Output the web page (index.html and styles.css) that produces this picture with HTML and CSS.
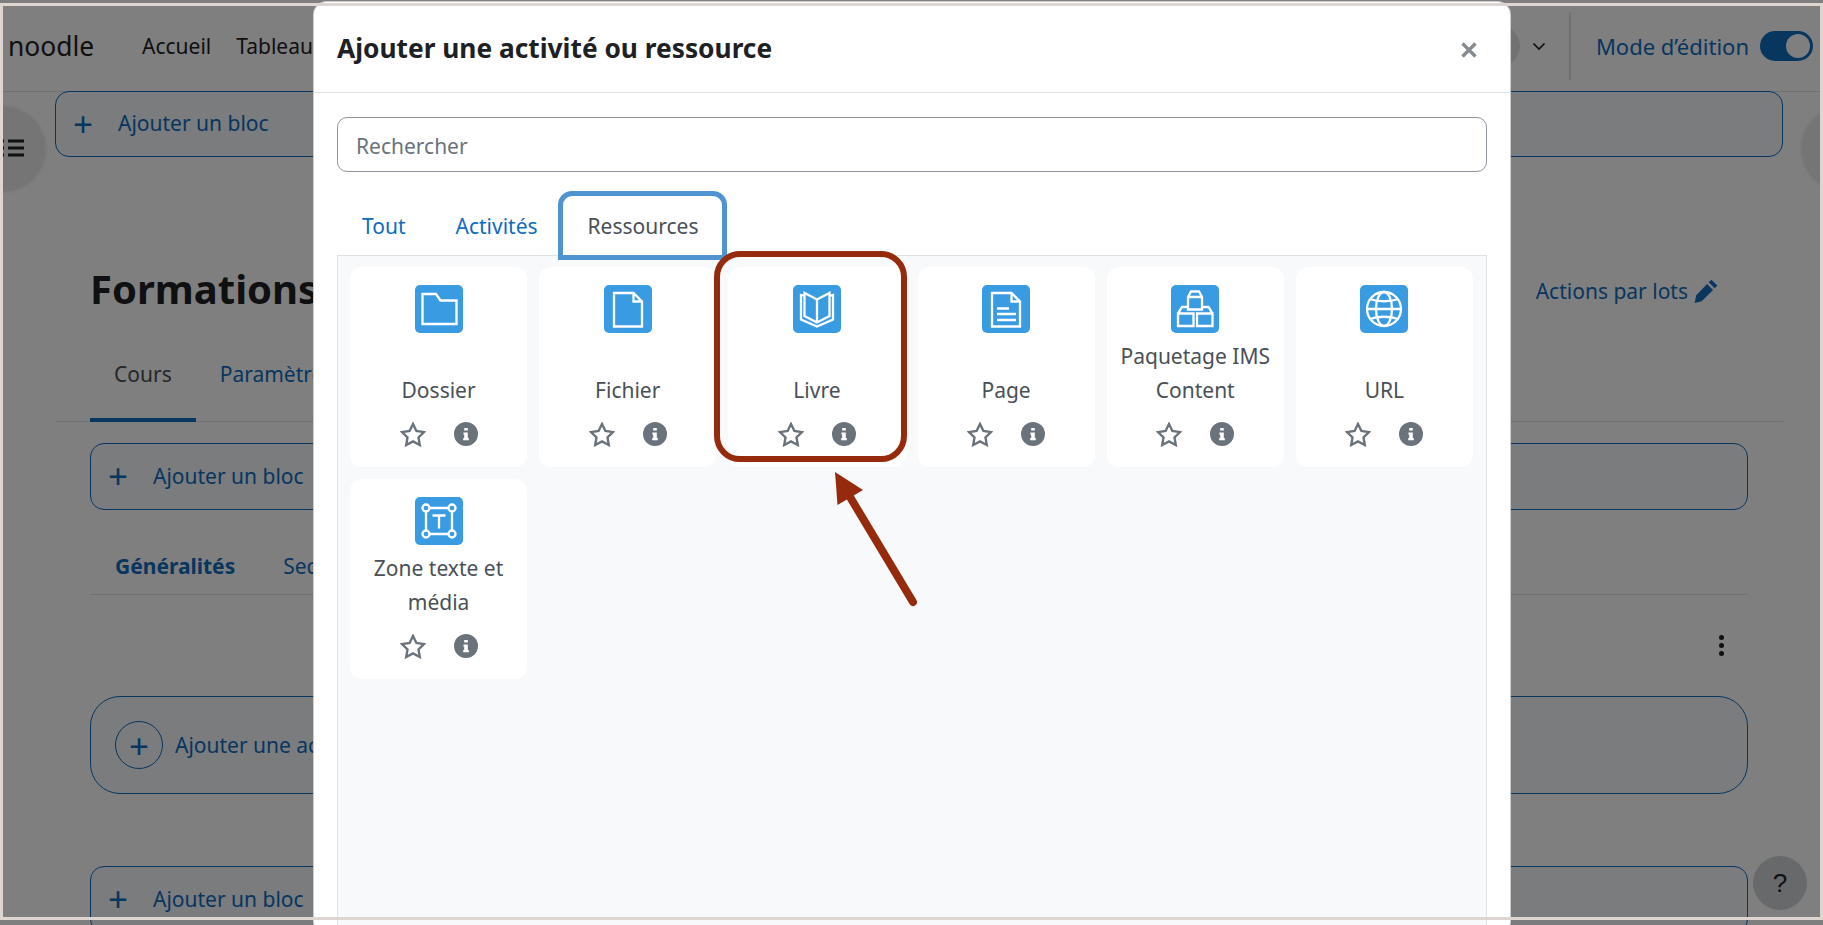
FILE: index.html
```html
<!DOCTYPE html>
<html lang="fr">
<head>
    <meta charset="UTF-8">
    <title>Ajouter une activité ou ressource</title>
    <link rel="stylesheet" href="styles.css">
</head>
<body>
    <div class="page">
        <header class="navbar">
            <span class="brand">noodle</span>
            <a class="nav-link">Accueil</a>
            <a class="nav-link">Tableau</a>
            <div class="nav-right">
                <span class="avatar"></span>
                <svg class="chevron" width="14" height="14" viewBox="0 0 14 14"><path d="M1.500 4.500l5.500 5.500 5.500-5.500" fill="none" stroke="#1d2125" stroke-width="1.700"/></svg>
                <span class="nav-sep"></span>
                <span class="edit-label">Mode d’édition</span>
                <span class="toggle"><span class="knob"></span></span>
            </div>
        </header>

        <button class="drawer drawer-left">
            <svg width="24" height="20" viewBox="0 0 24 20"><path d="M0 3h3M0 10h3M0 17h3M7 3h16M7 10h16M7 17h16" stroke="#1d2125" stroke-width="3"/></svg>
        </button>
        <span class="drawer drawer-right"></span>

        <div class="add-block add-block-top"><span class="plus">+</span>Ajouter un bloc</div>

        <main class="content">
            <div class="title-row">
                <h1>Formations</h1>
                <a class="bulk">Actions par lots
                    <svg width="26" height="26" viewBox="0 0 24 24"><path d="M17 1.500l5.500 5.500-2.500 2.500L14.500 4zM13 5.500l5.500 5.500L8 21.500 1.500 23 3 16z" fill="#0f6cbf"/></svg>
                </a>
            </div>
            <nav class="course-tabs">
                <a class="course-tab active">Cours</a>
                <a class="course-tab">Paramètres</a>
            </nav>
            <div class="add-block"><span class="plus">+</span>Ajouter un bloc</div>
            <nav class="section-tabs">
                <a class="section-tab active">Généralités</a>
                <a class="section-tab">Section 1</a>
            </nav>
            <div class="kebab-row"><span class="kebab"><i></i><i></i><i></i></span></div>
            <div class="add-activity"><span class="plus-circle">+</span>Ajouter une activité ou ressource</div>
            <div class="add-block add-block-last"><span class="plus">+</span>Ajouter un bloc</div>
        </main>

        <span class="help">?</span>
    </div>

    <div class="backdrop"></div>

    <section class="modal">
        <div class="modal-header">
            <h2>Ajouter une activité ou ressource</h2>
            <svg class="close" width="16" height="16" viewBox="0 0 16 16"><path d="M1.500 1.500l13 13M14.500 1.500l-13 13" stroke="#868b90" stroke-width="3.400"/></svg>
        </div>
        <div class="modal-body">
            <input class="search" type="text" placeholder="Rechercher">
            <div class="tabs">
                <a class="tab">Tout</a>
                <a class="tab">Activités</a>
                <a class="tab tab-active">Ressources</a>
            </div>
            <div class="panel">
                <div class="grid">
                    <div class="card">
                        <svg class="mod-icon" viewBox="0 0 48 48"><path d="M7.500 9h13.500l4.500 6.500h16v23.500h-34z"/></svg>
                        <div class="card-label">Dossier</div>
                        <div class="card-actions">
                            <svg class="star" viewBox="0 0 26 25"><path d="M13 2l3.400 7 7.600 1.100-5.500 5.300 1.300 7.600L13 19.400 6.200 23l1.300-7.600L2 10.100 9.600 9z"/></svg>
                            <svg class="info" viewBox="0 0 24 24"><circle cx="12" cy="12" r="12"/><path d="M10.200 6h3.600v2.600h-3.600zM9.500 10.500h4.300v5.500h1v2.200h-5.600V16h1v-3.300h-.7z"/></svg>
                        </div>
                    </div>
                    <div class="card">
                        <svg class="mod-icon" viewBox="0 0 48 48"><path d="M10 8h19.500l8.500 8.500V41.500H10zM29.500 8v8.500H38"/></svg>
                        <div class="card-label">Fichier</div>
                        <div class="card-actions">
                            <svg class="star" viewBox="0 0 26 25"><path d="M13 2l3.400 7 7.600 1.100-5.500 5.300 1.300 7.600L13 19.400 6.200 23l1.300-7.600L2 10.100 9.600 9z"/></svg>
                            <svg class="info" viewBox="0 0 24 24"><circle cx="12" cy="12" r="12"/><path d="M10.200 6h3.600v2.600h-3.600zM9.500 10.500h4.300v5.500h1v2.200h-5.600V16h1v-3.300h-.7z"/></svg>
                        </div>
                    </div>
                    <div class="card">
                        <svg class="mod-icon" viewBox="0 0 48 48"><path d="M24 14.500L11.500 8v23L24 37.500 36.500 31V8zM24 14.500v23M11.500 11L8 10v24.500l16 7 16-7V10l-3.500 1"/></svg>
                        <div class="card-label">Livre</div>
                        <div class="card-actions">
                            <svg class="star" viewBox="0 0 26 25"><path d="M13 2l3.400 7 7.600 1.100-5.500 5.300 1.300 7.600L13 19.400 6.200 23l1.300-7.600L2 10.100 9.600 9z"/></svg>
                            <svg class="info" viewBox="0 0 24 24"><circle cx="12" cy="12" r="12"/><path d="M10.200 6h3.600v2.600h-3.600zM9.500 10.500h4.300v5.500h1v2.200h-5.600V16h1v-3.300h-.7z"/></svg>
                        </div>
                    </div>
                    <div class="card">
                        <svg class="mod-icon" viewBox="0 0 48 48"><path d="M10 8h19.500l8.500 8.500V41.500H10zM29.500 8v8.500H38M15 23.500h12M15 29h19M15 35h19"/></svg>
                        <div class="card-label">Page</div>
                        <div class="card-actions">
                            <svg class="star" viewBox="0 0 26 25"><path d="M13 2l3.400 7 7.600 1.100-5.500 5.300 1.300 7.600L13 19.400 6.200 23l1.300-7.600L2 10.100 9.600 9z"/></svg>
                            <svg class="info" viewBox="0 0 24 24"><circle cx="12" cy="12" r="12"/><path d="M10.200 6h3.600v2.600h-3.600zM9.500 10.500h4.300v5.500h1v2.200h-5.600V16h1v-3.300h-.7z"/></svg>
                        </div>
                    </div>
                    <div class="card">
                        <svg class="mod-icon" viewBox="0 0 48 48"><path d="M17 12l3-5.500h8L31 12V24.500H17zM17 12h14M7 41V28.500L11 22h6M7 28.500h15.500V41H7zM26 41V28.500h15.500V41zM41.500 28.500L37.500 22H31"/></svg>
                        <div class="card-label">Paquetage IMS Content</div>
                        <div class="card-actions">
                            <svg class="star" viewBox="0 0 26 25"><path d="M13 2l3.400 7 7.600 1.100-5.500 5.300 1.300 7.600L13 19.400 6.200 23l1.300-7.600L2 10.100 9.600 9z"/></svg>
                            <svg class="info" viewBox="0 0 24 24"><circle cx="12" cy="12" r="12"/><path d="M10.200 6h3.600v2.600h-3.600zM9.500 10.500h4.300v5.500h1v2.200h-5.600V16h1v-3.300h-.7z"/></svg>
                        </div>
                    </div>
                    <div class="card">
                        <svg class="mod-icon" viewBox="0 0 48 48"><circle cx="24" cy="24" r="17"/><ellipse cx="24" cy="24" rx="8" ry="17"/><path d="M7 24h34M10 14c8 3 20 3 28 0M10 34c8-3 20-3 28 0"/></svg>
                        <div class="card-label">URL</div>
                        <div class="card-actions">
                            <svg class="star" viewBox="0 0 26 25"><path d="M13 2l3.400 7 7.600 1.100-5.500 5.300 1.300 7.600L13 19.400 6.200 23l1.300-7.600L2 10.100 9.600 9z"/></svg>
                            <svg class="info" viewBox="0 0 24 24"><circle cx="12" cy="12" r="12"/><path d="M10.200 6h3.600v2.600h-3.600zM9.500 10.500h4.300v5.500h1v2.200h-5.600V16h1v-3.300h-.7z"/></svg>
                        </div>
                    </div>
                    <div class="card">
                        <svg class="mod-icon" viewBox="0 0 48 48"><circle cx="11" cy="11" r="3.500"/><circle cx="37" cy="11" r="3.500"/><circle cx="11" cy="37" r="3.500"/><circle cx="37" cy="37" r="3.500"/><path d="M14.500 11h19M14.500 37h19M11 14.500v19M37 14.500v19M17.500 18.500h13M24 18.500v13"/></svg>
                        <div class="card-label">Zone texte et média</div>
                        <div class="card-actions">
                            <svg class="star" viewBox="0 0 26 25"><path d="M13 2l3.400 7 7.600 1.100-5.500 5.300 1.300 7.600L13 19.400 6.200 23l1.300-7.600L2 10.100 9.600 9z"/></svg>
                            <svg class="info" viewBox="0 0 24 24"><circle cx="12" cy="12" r="12"/><path d="M10.200 6h3.600v2.600h-3.600zM9.500 10.500h4.300v5.500h1v2.200h-5.600V16h1v-3.300h-.7z"/></svg>
                        </div>
                    </div>
                </div>
            </div>
        </div>
    </section>

    <!-- annotations from the screenshot -->
    <div class="mark-tab"></div>
    <div class="mark-card"></div>
    <svg class="mark-arrow" width="100" height="150" viewBox="0 0 100 150">
        <path d="M20 25L83 130" fill="none" stroke="#952a0d" stroke-width="8" stroke-linecap="round"/>
        <path d="M5 0L33 18L7.500 33z" fill="#952a0d"/>
    </svg>
    <div class="frame"></div>
</body>
</html>
```
FILE: styles.css
```css
* {
    box-sizing: border-box;
}
html, body {
    margin: 0;
    height: 925px;
    overflow: hidden;
}
body {
    font-family: "Noto Sans", "Open Sans", sans-serif;
    font-size: 21px;
    color: #1d2125;
    background: #fff;
    position: relative;
}
a {
    text-decoration: none;
}

/* page behind the modal */
.page {
    height: 925px;
    overflow: hidden;
}
.navbar {
    height: 92px;
    padding: 0 10px 0 8px;
    border-bottom: 1px solid #dee2e6;
    display: flex;
    align-items: center;
}
.brand {
    font-size: 26.400px;
    width: 134px;
}
.nav-link {
    margin-right: 25px;
    white-space: nowrap;
}
.nav-right {
    margin-left: auto;
    display: flex;
    align-items: center;
}
.avatar {
    width: 40px;
    height: 40px;
    border-radius: 50%;
    background: #e4e4e4;
    margin-right: 12px;
}
.chevron {
    margin-right: 23px;
}
.nav-sep {
    width: 2px;
    height: 68px;
    background: #dee2e6;
    margin-right: 25px;
}
.edit-label {
    color: #0f6cbf;
    font-size: 22px;
    margin-right: 11px;
}
.toggle {
    width: 53px;
    height: 30px;
    border-radius: 15px;
    background: #0f6cbf;
    display: flex;
    align-items: center;
    justify-content: flex-end;
    padding-right: 3px;
}
.knob {
    width: 24px;
    height: 24px;
    border-radius: 50%;
    background: #fff;
}
.drawer {
    position: absolute;
    top: 107px;
    width: 84px;
    height: 84px;
    border: 0;
    border-radius: 50%;
    background: #eaeaea;
    box-shadow: 0 0 4px rgba(0, 0, 0, .15);
    padding: 0;
}
.drawer-left {
    left: -39px;
    text-align: right;
    padding-right: 20px;
}
.drawer-right {
    left: 1802px;
}
.add-block {
    height: 67px;
    border: 1px solid #0f6cbf;
    border-radius: 14px;
    background: #f5f9fc;
    color: #0f6cbf;
    display: flex;
    align-items: center;
    padding: 0 0 2px 17px;
}
.add-block-top {
    height: 66px;
    margin: -1px 40px 0 55px;
}
.add-block-last {
    margin-top: 72px;
}
.plus {
    font-size: 35px;
    line-height: 1;
    width: 45px;
    font-weight: 400;
}
.content {
    margin: 0 75px 0 90px;
}
.title-row {
    display: flex;
    align-items: center;
    justify-content: space-between;
    height: 80px;
    margin-top: 93px;
    padding-right: 29px;
}
h1 {
    font-size: 40px;
    font-weight: 700;
    margin: -4px 0 0;
}
.bulk {
    color: #0f6cbf;
    display: flex;
    align-items: center;
    gap: 5px;
    margin-top: 2px;
}
.course-tabs {
    height: 92px;
    display: flex;
    align-items: flex-start;
    margin-left: -35px;
    margin-right: -35px;
    padding-left: 35px;
    border-bottom: 1px solid #dee2e6;
}
.course-tab {
    height: 92px;
    line-height: 88px;
    padding: 0 24px;
    color: #0f6cbf;
}
.course-tab.active {
    color: #495057;
    border-bottom: 4px solid #0f6cbf;
}
.course-tabs + .add-block {
    margin-top: 21px;
}
.section-tabs {
    height: 85px;
    display: flex;
    align-items: center;
    gap: 48px;
    padding: 28px 25px 0;
    border-bottom: 1px solid #dee2e6;
}
.section-tab {
    color: #0f6cbf;
}
.section-tab.active {
    font-weight: 700;
}
.kebab-row {
    height: 101px;
    display: flex;
    justify-content: flex-end;
    padding: 40px 24px 0 0;
}
.kebab {
    display: flex;
    flex-direction: column;
    gap: 3px;
}
.kebab i {
    width: 5px;
    height: 5px;
    border-radius: 50%;
    background: #1d2125;
}
.add-activity {
    height: 98px;
    border: 1px solid #0f6cbf;
    border-radius: 30px;
    background: #f5f9fc;
    color: #0f6cbf;
    display: flex;
    align-items: center;
    padding-left: 24px;
    gap: 12px;
}
.plus-circle {
    width: 48px;
    height: 48px;
    border: 1px solid #0f6cbf;
    border-radius: 50%;
    display: flex;
    align-items: center;
    justify-content: center;
    font-size: 35px;
}
.help {
    position: absolute;
    left: 1753px;
    top: 856px;
    width: 54px;
    height: 54px;
    border-radius: 50%;
    background: #ced2d5;
    display: flex;
    align-items: center;
    justify-content: center;
    font: 26px "Liberation Sans", sans-serif;
}

.backdrop {
    position: absolute;
    inset: 0;
    background: rgba(0, 0, 0, .5);
}

/* modal */
.modal {
    position: absolute;
    left: 313px;
    top: 1px;
    width: 1198px;
    height: 934px;
    background: #fff;
    border: 1px solid rgba(0, 0, 0, .2);
    border-radius: 14px;
}
.modal-header {
    height: 91px;
    padding: 0 23px;
    border-bottom: 1px solid #dee2e6;
    display: flex;
    align-items: center;
    justify-content: space-between;
}
h2 {
    font-size: 26.300px;
    font-weight: 700;
    margin: 1px 0 0;
}
.close {
    margin-right: 10px;
    margin-top: 5px;
}
.modal-body {
    padding: 24px 23px 0;
}
.search {
    display: block;
    width: 100%;
    height: 55px;
    border: 1px solid #8f959e;
    border-radius: 10px;
    padding: 2px 18px 0;
    font: inherit;
    color: #495057;
}
.search::placeholder {
    color: #6a737b;
}
.tabs {
    height: 83px;
    display: flex;
    align-items: flex-end;
    padding-left: 25px;
}
.tab {
    color: #0f6cbf;
    height: 62px;
    line-height: 66px;
    margin-right: 50px;
}
.tab-active {
    color: #495057;
}
.panel {
    height: 700px;
    background: #f8f9fa;
    border: 1px solid #dee2e6;
    padding: 11px 13px 11px 12px;
}
.grid {
    display: grid;
    grid-template-columns: repeat(6, 1fr);
    grid-auto-rows: 200px;
    gap: 12px;
}
.card {
    background: #fff;
    border-radius: 12px;
    padding-top: 18px;
    display: flex;
    flex-direction: column;
    align-items: center;
    text-align: center;
    color: #495057;
}
.mod-icon {
    width: 48px;
    height: 48px;
    flex: none;
    border-radius: 5px;
    background: #399be2;
    fill: none;
    stroke: #fff;
    stroke-width: 2.300;
}
.card-label {
    height: 68px;
    margin-top: 6px;
    line-height: 34px;
    display: flex;
    align-items: flex-end;
    justify-content: center;
    padding: 0 6px;
}
.card-actions {
    display: flex;
    gap: 28px;
    margin-top: 15px;
}
.star {
    width: 26px;
    height: 25px;
    fill: none;
    stroke: #6a737b;
    stroke-width: 2.400;
}
.info {
    width: 24px;
    height: 24px;
    fill: #6a737b;
}
.info path {
    fill: #fff;
}

/* red and blue marks drawn over the screenshot */
.mark-tab {
    position: absolute;
    left: 558px;
    top: 191px;
    width: 169px;
    height: 69px;
    border: 5px solid #4f94d0;
    border-radius: 14px 14px 0 0;
}
.mark-card {
    position: absolute;
    left: 714px;
    top: 251px;
    width: 193px;
    height: 211px;
    border: 6px solid #952a0d;
    border-radius: 26px;
}
.mark-arrow {
    position: absolute;
    left: 830px;
    top: 472px;
}
.frame {
    position: absolute;
    left: 0;
    top: 3px;
    right: 0;
    height: 917px;
    border: 3px solid #dfd5d0;
    pointer-events: none;
}
```
